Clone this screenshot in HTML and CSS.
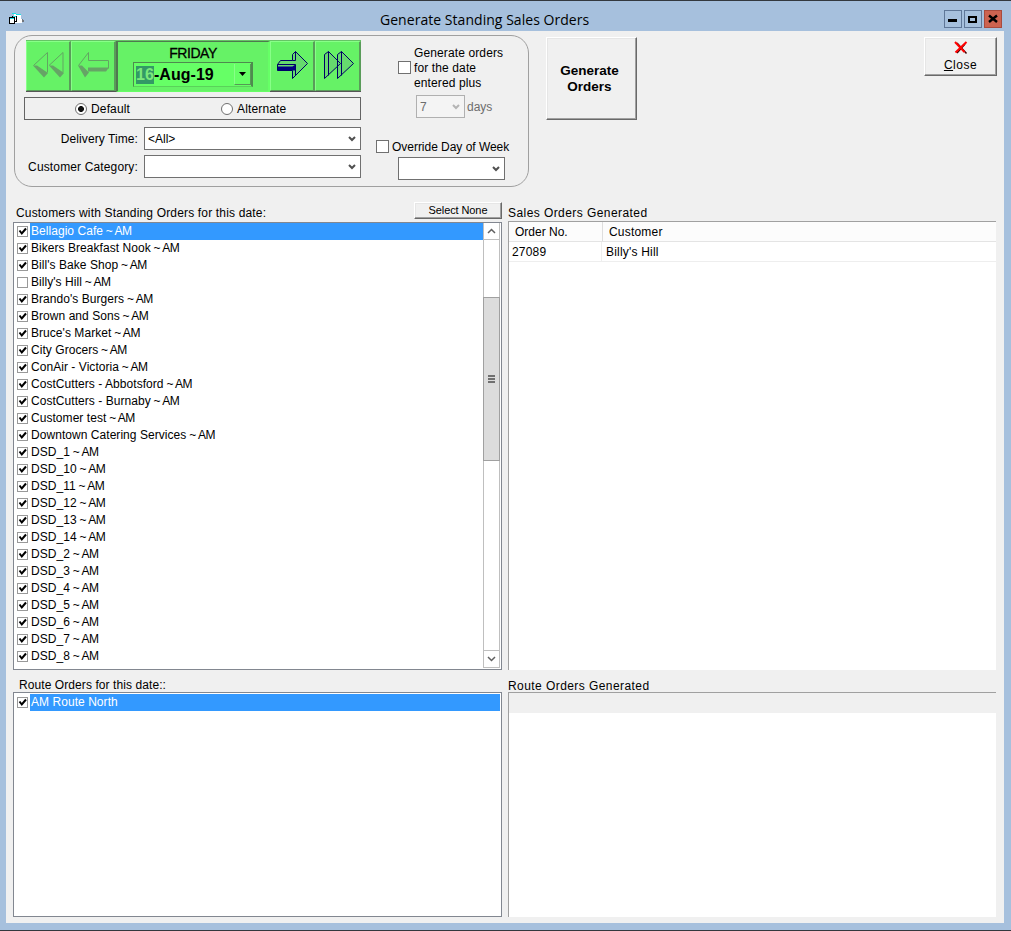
FILE: index.html
```html
<!DOCTYPE html>
<html lang="en">
<head>
<meta charset="utf-8">
<title>Generate Standing Sales Orders</title>
<link rel="stylesheet" href="styles.css">
</head>
<body>
<div class="window">
  <header class="titlebar">
    <svg class="app-icon" width="16" height="14" viewBox="0 0 16 14" shape-rendering="crispEdges">
      <path d="M5 1h7l1 9H6z" fill="#fff"/>
      <path d="M3 0h4v1h5v1H7V1H3z" fill="#1de3e6"/>
      <path d="M13 6h1v1h1v2h-2z" fill="#70757c"/>
      <path d="M3.500 3.500h4v5h-4z" fill="#fff" stroke="#000"/>
      <path d="M.5 4.500h5v6h-5z" fill="#fff" stroke="#000"/>
      <path d="M1 5.500h4M4 3.500h3" stroke="#1de3e6"/>
    </svg>
    <h1 class="title">Generate Standing Sales Orders</h1>
    <div class="win-buttons">
      <span class="win-btn"><svg width="16" height="16" shape-rendering="crispEdges"><path d="M3 8h9v3H3z"/></svg></span>
      <span class="win-btn"><svg width="16" height="16" shape-rendering="crispEdges"><path d="M3 5h9v7H3zM5 7v3h5V7z" fill-rule="evenodd"/></svg></span>
      <span class="win-btn win-close"><svg width="16" height="16"><path d="M4 4.500l8 6.500M12 4.500L4 11" stroke="#000" stroke-width="2.400"/></svg></span>
    </div>
  </header>

  <main class="client">
    <section class="top">
      <div class="frame">
        <div class="filters">
          <div class="date-nav">
            <button class="nav-btn"><svg width="42" height="48">
              <path d="M6.500 23.500L20.500 10.500v20M22 23.500L36 10.500v20" fill="none" stroke="#62a562"/>
              <path d="M6 23.500h4l11 7.500-4 4.500zM22 23.500h4l11 7.500-4 4.500z" fill="#66a466"/>
            </svg></button>
            <button class="nav-btn"><svg width="42" height="48">
              <path d="M6.500 23.500L16.500 10.500v8h20v8" fill="none" stroke="#62a562"/>
              <path d="M6 23.500h4l7 7-4 5zM16 25.500h21l-3 4H16z" fill="#66a466"/>
            </svg></button>
            <div class="date-panel">
              <div class="weekday">FRIDAY</div>
              <div class="date-box"><span class="date-text"><mark>16</mark>-Aug-19</span><span class="date-drop"><svg width="7" height="4"><path d="M0 0h7L3.500 4z"/></svg></span></div>
            </div>
            <button class="nav-btn"><svg width="42" height="48">
              <path d="M6.500 22.500l3-4h12v-6l3-3 12 12-15 15v-8h-15z" fill="#66da6e"/>
              <path d="M6.500 24.500h15l3-2v6h-18z" fill="#000080"/>
              <path d="M6.500 22.500l3-4h12v-6l3-3 12 12-15 15v-8h-15zM24.500 9.500v9h-3M6.500 22.500h18v11" fill="none" stroke="#000066"/>
            </svg></button>
            <button class="nav-btn nav-last"><svg width="42" height="48">
              <path d="M8.500 12.500l4-3 12 12-16 15zM21.500 12.500l4-3 12 12-16 15z" fill="#66da6e" stroke="#000066"/>
              <path d="M12.500 9.500v24M25.500 9.500v24" fill="none" stroke="#000066"/>
            </svg></button>
          </div>
          <div class="radios">
            <label class="radio-item"><span class="radio radio-on"></span><span class="radio-text">Default</span></label>
            <label class="radio-item"><span class="radio"></span><span class="radio-text">Alternate</span></label>
          </div>
          <div class="field"><span class="delivery-label">Delivery Time:</span><div class="combo"><span>&lt;All&gt;</span><svg class="arrow" width="8" height="8"><path d="M1 2l3 3 3-3"/></svg></div></div>
          <div class="field"><span class="category-label">Customer Category:</span><div class="combo"><svg class="arrow" width="8" height="8"><path d="M1 2l3 3 3-3"/></svg></div></div>
        </div>
        <div class="extras">
          <div class="plus"><span class="box"></span><span class="plus-text">Generate orders<br>for the date<br>entered plus</span></div>
          <div class="days"><div class="combo combo-off"><span>7</span><svg class="arrow" width="8" height="8"><path d="M1 2l3 3 3-3"/></svg></div><span class="days-text">days</span></div>
          <div class="override"><span class="box"></span><span class="override-text">Override Day of Week</span></div>
          <div class="combo override-combo"><svg class="arrow" width="8" height="8"><path d="M1 2l3 3 3-3"/></svg></div>
        </div>
      </div>
      <button class="push generate">Generate<br>Orders</button>
      <button class="push close"><svg width="14" height="14"><path d="M3 2l9.500 10.500M11 3L3 12" stroke="#400" stroke-width="1.500"/><path d="M1 1l9.500 10M12.500 1L1.500 11.500" stroke="#f00" stroke-width="2"/></svg><span class="close-text"><u>C</u>lose</span></button>
    </section>

    <section class="lists">
      <div class="caption"><span class="cap-customers">Customers with Standing Orders for this date:</span><button class="push select-none">Select None</button></div>
      <div class="caption"><span class="cap-wide">Sales Orders Generated</span></div>
      <div class="listbox">
        <ul class="items" id="customers"></ul>
        <div class="scrollbar">
          <span class="sb-btn"><svg width="9" height="6"><path d="M1 5l3.500-3.500L8 5"/></svg></span>
          <span class="sb-gap"></span>
          <span class="sb-thumb"><i></i><i></i><i></i></span>
          <span class="sb-btn sb-down"><svg width="9" height="6"><path d="M1 1l3.500 3.500L8 1"/></svg></span>
        </div>
      </div>
      <div class="grid">
        <div class="grid-head"><span>Order No.</span><span>Customer</span></div>
        <div class="grid-row"><span>27089</span><span>Billy's Hill</span></div>
      </div>
      <div class="caption caption-low"><span class="cap-routes">Route Orders for this date::</span></div>
      <div class="caption caption-low"><span class="cap-wide">Route Orders Generated</span></div>
      <div class="listbox routes"><ul class="items" id="routes"></ul></div>
      <div class="grid grid-low"><div class="grid-empty"></div></div>
    </section>
  </main>
</div>
<script src="script.js"></script>
</body>
</html>
```
FILE: styles.css
```css
* { box-sizing: border-box; }
body { margin: 0; font: 12px/15px "Liberation Sans", Arial, sans-serif; color: #000; }
button { font: inherit; color: inherit; padding: 0; margin: 0; border-radius: 0; }
svg { display: block; }

.window { width: 1011px; height: 931px; background: #a6c0dd; border-top: 1px solid #33383e; border-bottom: 1px solid #33383e; padding: 0 7px 0 6px; }
.titlebar { height: 30px; display: flex; }
.app-icon { margin: 12px 0 0 3px; }
.title { flex: 1; margin: 9px 0 0 355px; font: 14px/20px "Open Sans", sans-serif; letter-spacing: 0.040px; white-space: nowrap; }
.win-buttons { display: flex; gap: 2px; margin: 9px 2px 0 0; }
.win-btn { width: 18px; height: 18px; border: 1px solid #5f7798; }
.win-close { background: #cd6350; border-color: #a94b3e; }

.client { height: 892px; width: 998px; background: #f0f0f0; }
.top { height: 170px; padding: 4px 7px 0 8px; display: flex; align-items: flex-start; }
.frame { width: 515px; height: 152px; border: 1px solid #a0a0a0; border-radius: 18px; display: flex; padding: 4px 0 0 9px; }
.filters { width: 337px; }

.date-nav { display: flex; width: 335px; height: 52px; margin-left: 2px; background: #66f066; border-top: 1px solid #66c466; border-bottom: 1px solid #555; }
.nav-btn { width: 45px; height: 50px; background: #66f266; border: 0; border-top: 1px solid #8f8; border-left: 1px solid #8f8; border-right: 2px solid #5a9c5a; border-bottom: 1px solid #5a9c5a; }
.date-panel { width: 154px; height: 51px; border-left: 2px solid #4f7a4f; border-top: 1px solid #4f7a4f; border-bottom: 1px solid #66ff66; border-right: 2px solid #66ff66; background: #66f266; display: flex; flex-direction: column; align-items: center; }
.weekday { font-size: 14px; line-height: 14px; margin-top: 4px; letter-spacing: -0.450px; -webkit-text-stroke: 0.300px #000; }
.date-box { width: 120px; height: 25px; margin-top: 2px; border: 1px solid #4f8a4f; border-right-width: 2px; border-bottom: 1px solid #5ad25a; background: #66ff66; display: flex; justify-content: space-between; }
.date-text { font: bold 16px/18px "Liberation Sans", Arial, sans-serif; margin: 3px 0 0 2px; letter-spacing: 0.050px; }
.date-text mark { background: #339966; color: #7be87b; padding: 0; display: inline-block; height: 18px; }
.date-drop { width: 17px; height: 21px; margin-top: 1px; display: flex; align-items: center; justify-content: center; border-left: 1px solid #8f8; border-right: 1px solid #559955; border-bottom: 1px solid #559955; }
.nav-last { width: 46px; }

.radios { height: 23px; margin-top: 5px; border: 1px solid #646464; display: flex; padding-left: 50px; align-items: center; }
.radio-item { display: flex; gap: 4px; align-items: center; width: 146px; flex: none; }
.radio-text { margin-top: 2px; letter-spacing: 0.150px; }
.radio { width: 12px; height: 12px; border: 1px solid #707070; border-radius: 50%; background: #fff; }
.radio-on { background: radial-gradient(circle, #111 2.600px, #fff 3.300px); }

.field { display: flex; justify-content: flex-end; align-items: center; gap: 6px; margin-top: 7px; height: 23px; }
.field + .field { margin-top: 5px; }
.delivery-label, .category-label { margin-top: 2px; letter-spacing: 0.080px; }
.category-label { letter-spacing: 0.140px; }
.combo { width: 217px; height: 23px; background: #fff; border: 1px solid #707070; display: flex; align-items: center; padding: 0 4px 0 3px; }
.combo span { margin-top: 2px; }
.arrow { margin-left: auto; }
.arrow path { fill: none; stroke: #505050; stroke-width: 2; }

.extras { margin-left: 15px; padding-top: 5px; }
.box { width: 13px; height: 13px; background: #fff; border: 1px solid #707070; flex: none; }
.plus { display: flex; align-items: center; gap: 3px; margin-left: 22px; height: 45px; }
.plus-text { padding-top: 2px; letter-spacing: 0.120px; }
.days { display: flex; align-items: center; gap: 2px; margin: 5px 0 0 40px; color: #6d6d6d; }
.days-text { margin-top: 2px; }
.days .combo { width: 49px; }
.combo-off { background: #f4f4f4; border-color: #b0b0b0; }
.combo-off .arrow path { stroke: #b4b4b4; }
.override { display: flex; align-items: center; gap: 3px; margin-top: 21px; height: 15px; }
.override-text { margin-top: 2px; letter-spacing: -0.030px; }
.override-combo { width: 107px; margin: 3px 0 0 22px; }

.push { background: #f0f0f0; border: 1px solid; border-color: #fff #696969 #696969 #fff; box-shadow: inset -1px -1px #a0a0a0, inset 1px 1px #e6e6e6; }
.generate { width: 91px; height: 83px; margin: 2px 0 0 17px; font: bold 13px/16px "Liberation Sans", Arial, sans-serif; font-size: 13.500px; padding-right: 4px; }
.close { width: 73px; height: 39px; margin: 2px 0 0 auto; display: flex; flex-direction: column; align-items: center; padding-top: 3px; }
.close-text { line-height: 15px; margin-top: 3px; letter-spacing: 0.500px; }

.lists { display: grid; grid-template-columns: 489px 488px; grid-template-rows: 21px 448px 22px 225px; column-gap: 6px; padding-left: 7px; }
.caption { display: flex; justify-content: space-between; }
.caption > span { margin-top: 5px; white-space: nowrap; }
.caption > .cap-customers { margin-left: 3px; letter-spacing: 0.165px; }
.caption-low > span { margin-top: 8px; }
.caption-low > .cap-wide { margin-top: 9px; }
.cap-routes { margin-left: 6px; letter-spacing: 0.080px; }
.cap-wide { letter-spacing: 0.430px; }
.select-none { width: 88px; height: 17px; margin-top: 1px; font-size: 11px; line-height: 13px; letter-spacing: -0.100px; }

.listbox { border: 1px solid #828790; background: #fff; display: flex; }
.items { list-style: none; margin: 0; padding: 0; flex: 1; }
.item { height: 17px; display: flex; align-items: center; padding-left: 3px; }
.tick { width: 11px; height: 11px; border: 1px solid #999; flex: none; background: #fff; }
.name { flex: 1; margin-left: 2px; height: 17px; line-height: 16px; padding-left: 1px; white-space: pre; letter-spacing: 0.050px; }
.suffix { letter-spacing: -0.500px; }
.item.selected .name { background: #3399ff; color: #fff; }
.scrollbar { width: 17px; height: 445px; margin-right: 1px; border: 1px solid #bfbfbf; border-top: 0; display: flex; flex-direction: column; }
.sb-btn { height: 17px; display: flex; align-items: center; justify-content: center; border-bottom: 1px solid #bfbfbf; }
.sb-btn path { fill: none; stroke: #606060; stroke-width: 1.500; }
.sb-gap { height: 57px; }
.sb-thumb { height: 164px; margin: 0 -1px; border: 1px solid #a0a0a0; background: #dcdcdc; display: flex; flex-direction: column; align-items: center; justify-content: center; gap: 1px; }
.sb-thumb i { width: 7px; height: 2px; background: #707070; }
.sb-down { margin-top: auto; border-bottom: 0; border-top: 1px solid #bfbfbf; }
.routes .items { padding: 1px 1px 0 0; }

.grid { background: #fff; border-left: 1px solid #a0a0a0; border-top: 1px solid #a0a0a0; margin-top: -1px; }
.grid-low { margin-top: 0; }
.grid-head, .grid-row { display: flex; height: 20px; line-height: 21px; border-bottom: 1px solid #e4e4e4; }
.grid-head { background: #fcfcfc; letter-spacing: 0.200px; }
.grid-head span:first-child { width: 94px; padding-left: 6px; border-right: 1px solid #dedede; letter-spacing: 0; }
.grid-head span + span { padding-left: 6px; }
.grid-row { border-color: #eee; letter-spacing: 0.200px; }
.grid-row span:first-child { width: 93px; padding-left: 3px; border-right: 1px solid #eee; }
.grid-row span + span { padding-left: 4px; }
.grid-empty { height: 20px; background: #f0f0f0; }
```
FILE: script.js
```js
const customers = ["Bellagio Cafe", "Bikers Breakfast Nook", "Bill's Bake Shop", "Billy's Hill",
  "Brando's Burgers", "Brown and Sons", "Bruce's Market", "City Grocers", "ConAir - Victoria",
  "CostCutters - Abbotsford", "CostCutters - Burnaby", "Customer test", "Downtown Catering Services",
  "DSD_1", "DSD_10", "DSD_11", "DSD_12", "DSD_13", "DSD_14", "DSD_2", "DSD_3", "DSD_4", "DSD_5",
  "DSD_6", "DSD_7", "DSD_8"];
const check = '<svg width="9" height="9"><path d="M1.500 3.500l2.300 3L8 1.500" fill="none" stroke="#000" stroke-width="2"/></svg>';

function fill(id, names, unchecked, suffix) {
  document.getElementById(id).innerHTML = names.map((name, i) =>
    `<li class="item${i === 0 ? " selected" : ""}"><span class="tick">${unchecked.includes(i) ? "" : check}</span><span class="name">${name}<span class="suffix">${suffix}</span></span></li>`
  ).join("");
}
fill("customers", customers, [3], " ~ AM");
fill("routes", ["AM Route North"], [], "");
```
